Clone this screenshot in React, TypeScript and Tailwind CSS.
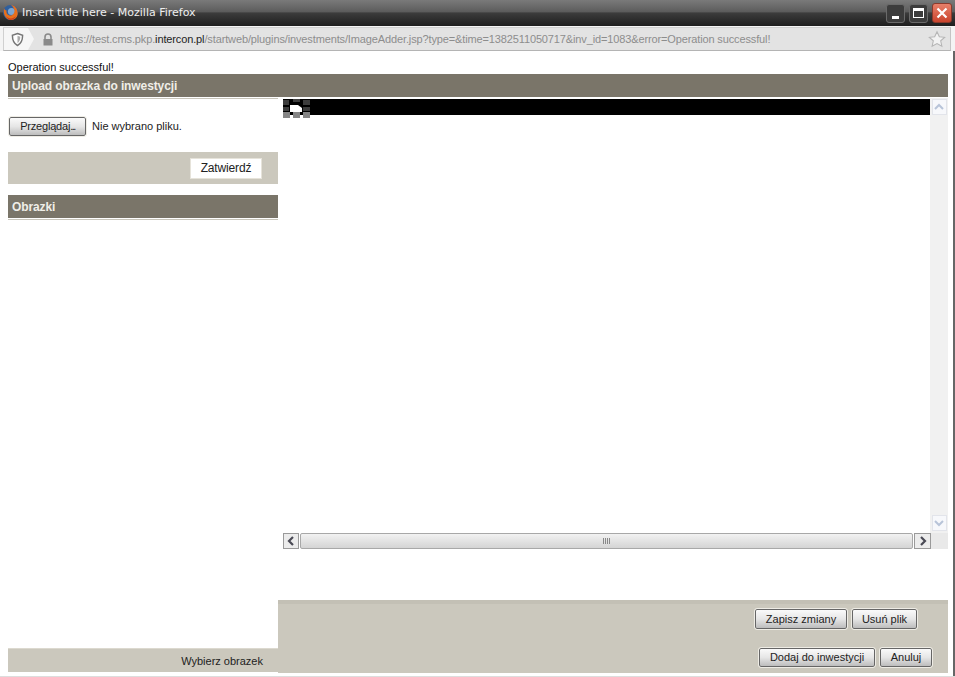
import React from 'react';

const ui = 'font-["Liberation_Sans",Arial,sans-serif]';

function GrayButton({ label, className }: { label: React.ReactNode; className: string }) {
  return (
    <button
      className={`flex items-center justify-center rounded-[2px] border border-[#666] bg-gradient-to-b from-[#fafafa] via-[#e6e6e6] to-[#bdbdbd] text-[11px] text-[#222] outline outline-1 outline-[#eeece5] ${className}`}
    >
      {label}
    </button>
  );
}

function FirefoxLogo() {
  return (
    <svg width="17" height="17" viewBox="0 0 17 17" className="mb-[2px]">
      <circle cx="8.5" cy="8.5" r="7.5" fill="#2f5f9e" />
      <circle cx="9.5" cy="7.5" r="3.6" fill="#7fa6d0" />
      <path d="M2 4.5 C1 9 3 15.5 9 16 C13.5 16 16.5 12 15.5 7.5 C15 4 12.5 1.5 9 1 C11 2.5 12.5 4.5 12.5 7 C12.5 10 10 12 7.5 11.5 C5 11 4 8.5 4.5 6.5 C3.5 6.5 2.5 5.5 2 4.5 Z" fill="#e8701c" />
      <path d="M4 12 C6 15 11 15.5 14 12 C13 15 10 16 8.5 16 C6.5 16 5 14 4 12 Z" fill="#c9401a" />
    </svg>
  );
}

function TitleBar() {
  return (
    <div className="flex h-[26px] items-center bg-[linear-gradient(180deg,#7a7a7a_0%,#5c5c5c_45%,#3c3c3c_50%,#1e1e1e_100%)] pl-[2px] pr-[3px]">
      <FirefoxLogo />
      <span className='ml-[3px] font-["DejaVu_Sans",sans-serif] text-[11px] text-[#eeeeee]'>
        Insert title here - Mozilla Firefox
      </span>
      <div className="ml-auto flex items-center gap-[4px]">
        <div className="flex h-[19px] w-[19px] items-end justify-center rounded-[3px] border border-[#6a6a6a] bg-[#3c3c3c] pb-[3px]">
          <div className="h-[3px] w-[7px] bg-white" />
        </div>
        <div className="flex h-[19px] w-[19px] items-center justify-center rounded-[3px] border border-[#6a6a6a] bg-[#3c3c3c]">
          <div className="h-[10px] w-[11px] border border-t-[3px] border-white" />
        </div>
        <div className="flex h-[20px] w-[20px] items-center justify-center rounded-[3px] border border-[#8c3a2c] bg-gradient-to-b from-[#e8806a] to-[#c9432c]">
          <svg width="12" height="12" viewBox="0 0 12 12">
            <path d="M1.5 1.5 L10.5 10.5 M10.5 1.5 L1.5 10.5" stroke="#fff" strokeWidth="2.2" />
          </svg>
        </div>
      </div>
    </div>
  );
}

function UrlBar() {
  return (
    <div className="flex h-[25px] bg-[#f4f4f4] pl-[3px] pr-[4px] pt-[1px]">
      <div className="flex flex-1 items-center border border-t-[#d0d0d0] border-r-[#c4c4c4] border-b-[#b4b4b4] border-l-[#d0d0d0] bg-[#e3e3e3]">
        <div className="flex h-full w-[30px] items-center justify-center bg-[#f6f6f6] [clip-path:polygon(0_0,80%_0,100%_50%,80%_100%,0_100%)]">
          <svg width="13" height="15" viewBox="0 0 14 15" className="mr-[3px]">
            <path d="M7 1 L12.5 3 C12.5 8 11 12 7 14 C3 12 1.5 8 1.5 3 Z" fill="#fff" stroke="#777" strokeWidth="1.6" />
            <path d="M7 3.5 L10 4.5 C10 7.5 9 10 7 11.5 Z" fill="#aaa" />
          </svg>
        </div>
        <svg width="12" height="13" viewBox="0 0 12 13" className="ml-[8px]">
          <path d="M3 6 V4 A3 3 0 0 1 9 4 V6" fill="none" stroke="#8a8a8a" strokeWidth="1.6" />
          <rect x="1.5" y="6" width="9" height="6.5" fill="#8a8a8a" />
        </svg>
        <span className={`ml-[6px] whitespace-nowrap text-[11px] tracking-[-0.13px] text-[#8d8d8d] ${ui}`}>
          https://test.cms.pkp.<span className="text-[#222]">intercon.pl</span>
          /startweb/plugins/investments/ImageAdder.jsp?type=&amp;time=1382511050717&amp;inv_id=1083&amp;error=Operation successful!
        </span>
        <svg width="18" height="18" viewBox="0 0 20 19" className="ml-auto mr-[4px]">
          <path d="M10 1.5 L12.6 7 L18.5 7.6 L14.1 11.5 L15.4 17.5 L10 14.5 L4.6 17.5 L5.9 11.5 L1.5 7.6 L7.4 7 Z" fill="#f2f2f2" stroke="#b5b5b5" strokeWidth="1.2" />
        </svg>
      </div>
    </div>
  );
}

function Band({ title, className }: { title: string; className: string }) {
  return (
    <div className={`flex h-[23px] items-center bg-[#7a7569] pl-[4px] text-[12px] font-bold tracking-[-0.1px] text-[#f0eee8] ${className}`}>
      {title}
    </div>
  );
}

// pixelated broken image placeholder sitting on the black bar
function BrokenImage() {
  return (
    <svg width="28" height="19" viewBox="0 0 28 19" className="absolute left-0 top-0">
      <path d="M0 0h28v13H0z" fill="#000" />
      <path d="M0 1h6v5H0zM10 0h7v3h-7zM20 1h7v5h-7zM0 8h6v4H0zM20 8h7v4h-7z" fill="#3c3c3c" />
      <path d="M0 13h7v6H0zM10 13h7v6h-7zM20 13h7v6h-7z" fill="#858585" />
      <path d="M7 6h8l4 3v4H7z" fill="#fff" />
    </svg>
  );
}

function Arrow({ d }: { d: string }) {
  return (
    <svg width="10" height="10" viewBox="0 0 10 10">
      <path d={d} fill="none" stroke="#4a4a55" strokeWidth="2.2" />
    </svg>
  );
}

function ImageFrame() {
  return (
    <div className="ml-[5px] mt-[1px] flex h-[451px] flex-col">
      <div className="relative flex min-h-0 flex-1">
        <div className="relative mt-[1px] h-[16px] flex-1 bg-black">
          <BrokenImage />
        </div>
        <div className="flex w-[18px] flex-col items-center justify-between bg-[#f1f1f1] pb-[2px] pt-[1px]">
          <div className="flex h-[16px] w-[15px] items-center justify-center border border-[#e2e4ea] bg-[#f7f8fb]">
            <svg width="10" height="8" viewBox="0 0 10 8">
              <path d="M1 6 L5 2 L9 6" fill="none" stroke="#b8c4d8" strokeWidth="2" />
            </svg>
          </div>
          <div className="flex h-[16px] w-[15px] items-center justify-center border border-[#e2e4ea] bg-[#f7f8fb]">
            <svg width="10" height="8" viewBox="0 0 10 8">
              <path d="M1 2 L5 6 L9 2" fill="none" stroke="#b8c4d8" strokeWidth="2" />
            </svg>
          </div>
        </div>
      </div>
      <div className="flex h-[16px] items-stretch">
        <div className="flex w-[16px] items-center justify-center border border-[#9a9a9a] bg-[#ececec]">
          <Arrow d="M7 1 L3 5 L7 9" />
        </div>
        <div className="ml-[1px] flex flex-1 items-center justify-center rounded-[2px] border border-[#a8a8a8] bg-gradient-to-b from-[#f2f2f2] to-[#d4d4d4]">
          <div className="h-[6px] w-[7px] bg-[repeating-linear-gradient(90deg,#888_0,#888_1px,transparent_1px,transparent_2px)]" />
        </div>
        <div className="ml-[1px] flex w-[17px] items-center justify-center border border-[#9a9a9a] bg-[#ececec]">
          <Arrow d="M3 1 L7 5 L3 9" />
        </div>
        <div className="w-[17px] bg-[#e9e9e9]" />
      </div>
    </div>
  );
}

export default function App() {
  return (
    <div className={`flex h-[677px] w-[955px] flex-col overflow-hidden border-b border-b-[#dddddd] bg-white ${ui}`}>
      <TitleBar />
      <UrlBar />
      <div className="flex min-h-0 flex-1 flex-col border-r-2 border-[#666] pl-[8px] pr-[5px]">
        <div className="flex h-[23px] items-end pb-[1px] text-[11px] leading-[12px] text-[#111]">Operation successful!</div>
        <Band title="Upload obrazka do inwestycji" className="" />
        <div className="flex min-h-0 flex-1">
          {/* left column */}
          <div className="flex w-[270px] flex-col">
            <div className="mt-[1px] h-[1px] bg-[#c8c5bb]" />
            <div className="mt-[18px] flex items-center">
              <GrayButton
                label={<>Przeglądaj<span className="tracking-[-1.5px]">...</span></>}
                className="ml-[1px] h-[19px] w-[77px] tracking-[-0.2px] outline-0"
              />
              <span className="ml-[6px] text-[11px] text-[#222]">Nie wybrano pliku.</span>
            </div>
            <div className="mt-[16px] flex h-[32px] items-center justify-end bg-[#cbc8bd] pr-[16px]">
              <div className="flex h-[21px] w-[72px] items-center justify-center border border-[#e6e3da] bg-white text-[12px] tracking-[-0.15px] text-[#222]">
                Zatwierdź
              </div>
            </div>
            <Band title="Obrazki" className="mt-[11px]" />
            <div className="mt-[1px] h-[1px] bg-[#c8c5bb]" />
            <div className="mb-[4px] mt-auto flex h-[24px] items-center justify-end border-t border-[#dcd9cf] bg-[#cbc8bd] pr-[15px] pt-[1px] text-[11px] text-[#222]">
              Wybierz obrazek
            </div>
          </div>
          {/* right column */}
          <div className="flex min-w-0 flex-1 flex-col">
            <ImageFrame />
            <div className="mb-[3px] mt-[51px] flex flex-1 flex-col border-t-[4px] border-[#c3c0b5] bg-[#cbc8bd] pt-[5px]">
              <div className="flex justify-end gap-[5px] pr-[31px]">
                <GrayButton label="Zapisz zmiany" className="h-[20px] w-[92px]" />
                <GrayButton label="Usuń plik" className="h-[20px] w-[65px]" />
              </div>
              <div className="mt-[19px] flex justify-end gap-[5px] pr-[16px]">
                <GrayButton label="Dodaj do inwestycji" className="h-[19px] w-[116px]" />
                <GrayButton label="Anuluj" className="h-[19px] w-[52px]" />
              </div>
            </div>
          </div>
        </div>
      </div>
    </div>
  );
}
